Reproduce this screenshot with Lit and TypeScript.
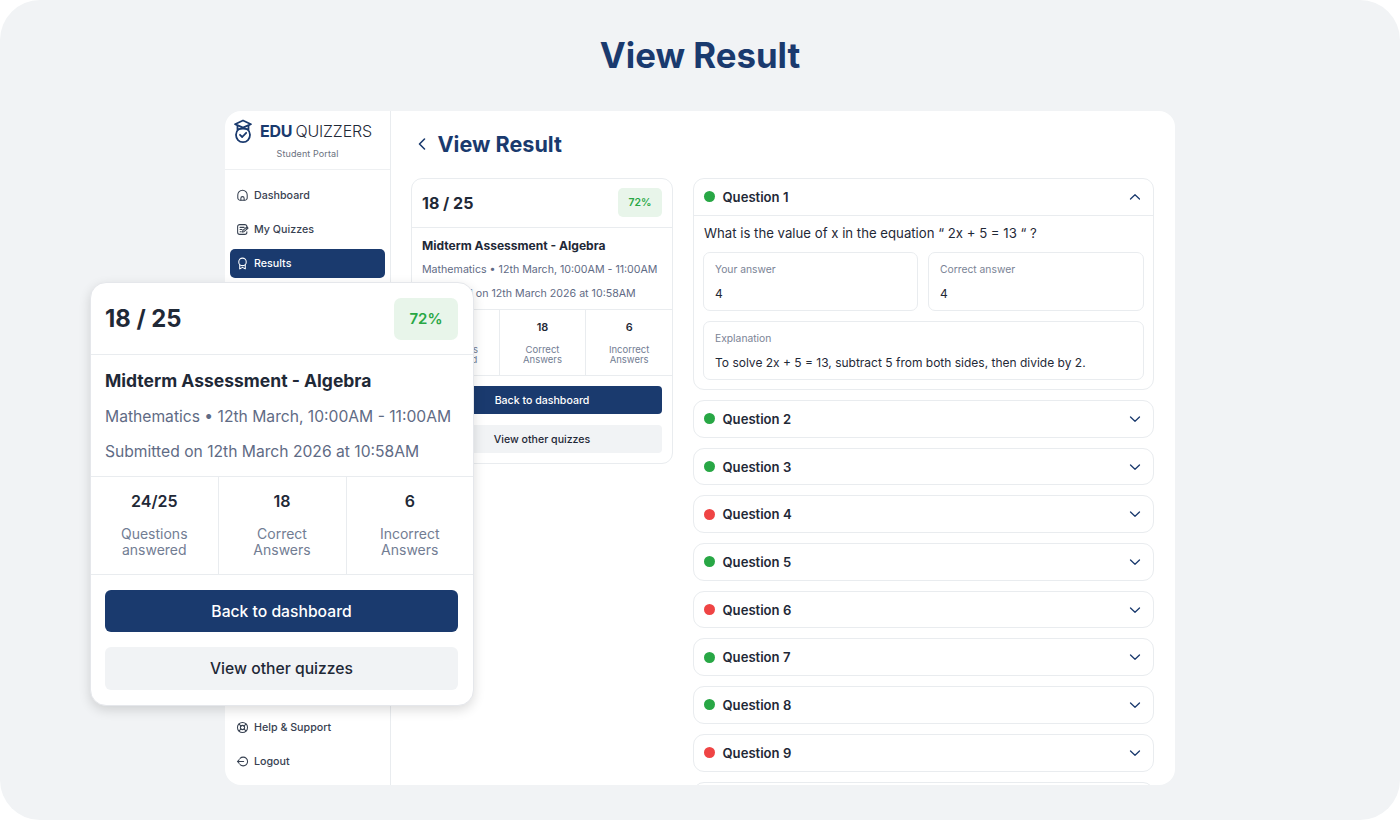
import { LitElement, html, css, svg } from "lit";
import { customElement } from "lit/decorators.js";

const ICONS: Record<string, unknown> = {
  home: svg`<path d="M2.2 7.4a5.8 5.8 0 0 1 11.6 0v3.4a3 3 0 0 1-3 3H5.2a3 3 0 0 1-3-3z"/><path d="M6 13.6v-2.2a2 2 0 0 1 4 0v2.2"/>`,
  quiz: svg`<path d="M13.4 7.2V4.6a2.6 2.6 0 0 0-2.6-2.6H4.6A2.6 2.6 0 0 0 2 4.6v6.8A2.6 2.6 0 0 0 4.6 14h6.2a2.6 2.6 0 0 0 2.6-2.6v-.6"/><path d="M5 5.4h5M5 8h2.4M5 10.8h1.6"/><path d="M8 11.2l.5-2 5-4.4 1.3 1.4-5 4.5z"/>`,
  award: svg`<circle cx="8" cy="6" r="4.6"/><path d="M4.6 9.6v5l3.4-1.8 3.4 1.8V9.6"/>`,
  help: svg`<circle cx="8" cy="8" r="6.2"/><circle cx="8" cy="8" r="2.6"/><path d="M3.8 3.8l2.4 2.4M12.2 3.8L9.8 6.2M3.8 12.2l2.4-2.4M12.2 12.2L9.8 9.8"/>`,
  logout: svg`<path d="M5 4.2A5.4 5.4 0 1 1 5 11.8"/><path d="M9.4 8H1.8M4 5.8L1.8 8 4 10.2"/>`,
};

const icon = (n: string) =>
  html`<svg class="nav-ic" viewBox="0 0 16 16" fill="none" stroke="currentColor" stroke-width="1.3" stroke-linecap="round" stroke-linejoin="round">${ICONS[n]}</svg>`;

const chevron = (up: boolean) =>
  html`<svg class="chev" viewBox="0 0 12 12" fill="none" stroke="#1a3a6e" stroke-width="1.3" stroke-linecap="round" stroke-linejoin="round"><path d=${up ? "M1.5 8L6 3.8 10.5 8" : "M1.5 4L6 8.2 10.5 4"}/></svg>`;

const QUESTIONS: [number, boolean][] = [
  [2, true], [3, true], [4, false], [5, true], [6, false], [7, true], [8, true], [9, false],
];

@customElement("app-root")
export class AppRoot extends LitElement {
  static styles = css`
    :host { display: block; width: 1400px; height: 820px; background: #fff; font-family: Inter, "Noto Sans", sans-serif; color: #1f2937; overflow: hidden; }
    * { box-sizing: border-box; }
    .page { position: relative; width: 1400px; height: 820px; background: #f1f3f5; border-radius: 40px; display: flex; flex-direction: column; align-items: center; overflow: hidden; }
    h1 { margin: 0; height: 111px; padding-top: 33px; font-size: 34.8px; line-height: 44px; font-weight: 700; color: #1a3a6e; }
    .win { width: 950px; height: 674px; background: #fff; border-radius: 16px; display: flex; overflow: hidden; }
    .side { width: 166px; flex: none; border-right: 1px solid #e9ecef; display: flex; flex-direction: column; }
    .brand { height: 59px; flex: none; border-bottom: 1px solid #eef0f2; display: flex; flex-direction: column; align-items: center; }
    .logo { display: flex; align-items: center; height: 26px; margin-top: 7px; width: 100%; padding-left: 8px; }
    .logo svg { width: 20px; height: 25px; flex: none; margin-right: 7px; }
    .edu { font-size: 16px; font-weight: 700; color: #1a3a6e; letter-spacing: -0.2px; margin-right: 3px; }
    .qz { font-size: 16px; font-weight: 300; color: #1f2937; letter-spacing: -0.15px; }
    .portal { margin-top: 3px; font-size: 9px; line-height: 14px; color: #6b7280; letter-spacing: 0.1px; }
    .nav { padding: 11px 5px 0; display: flex; flex-direction: column; gap: 5.2px; }
    .item { height: 29px; border-radius: 5px; display: flex; align-items: center; gap: 5px; padding-left: 6px; font-size: 10.7px; font-weight: 450; color: #374151; }
    .item.on { background: #1a3a6e; color: #fff; }
    .nav-ic { width: 13px; height: 13px; flex: none; }
    .spacer { flex: 1; }
    .nav.bottom { padding: 0 5px 9px; }
    .main { flex: 1; min-width: 0; padding: 0 21px 0 20px; display: flex; flex-direction: column; }
    .head { height: 67px; flex: none; display: flex; align-items: center; padding-bottom: 2px; }
    .back { width: 10px; height: 14px; margin: 0 10.5px 0 6px; flex: none; }
    h2 { margin: 0; font-size: 21.6px; font-weight: 700; color: #1a3a6e; line-height: 32px; }
    .cols { display: flex; gap: 20px; align-items: flex-start; flex: 1; min-height: 0; }
    .card { width: 262px; flex: none; border: 1px solid #e9ecef; border-radius: 11px; background: #fff; }
    .chd { height: 49px; padding: 0 10px 1px; display: flex; align-items: center; justify-content: space-between; border-bottom: 1px solid #e9ecef; }
    .score { font-size: 16px; font-weight: 650; color: #1f2937; }
    .pct { width: 44px; height: 29px; border-radius: 5px; background: #e8f5ea; color: #28a745; font-size: 10.4px; font-weight: 600; display: flex; align-items: center; justify-content: center; }
    .info { height: 82px; padding: 12px 10px 0; border-bottom: 1px solid #e9ecef; }
    .tt { font-size: 12.05px; font-weight: 650; line-height: 12px; color: #1f2937; margin-bottom: 11px; }
    .mt { font-size: 10.65px; line-height: 14px; color: #5f6b85; margin-top: 10px; white-space: nowrap; }
    .stats { height: 66px; display: grid; grid-template-columns: repeat(3, 1fr); border-bottom: 1px solid #e9ecef; }
    .st { text-align: center; padding-top: 10px; border-left: 1px solid #e9ecef; }
    .st:first-child { border-left: 0; }
    .sv { font-size: 10.9px; font-weight: 600; line-height: 14px; color: #1f2937; }
    .sl { font-size: 9.5px; line-height: 10.5px; color: #727d93; margin-top: 10.5px; }
    .btns { padding: 10px 10px 10px; display: flex; flex-direction: column; gap: 11px; }
    .btn { height: 28px; border-radius: 4px; display: flex; align-items: center; justify-content: center; font-size: 10.6px; font-weight: 450; }
    .btn.pri { background: #1a3a6e; color: #fff; }
    .btn.sec { background: #f1f3f5; color: #1f2937; }

    .float { position: absolute; left: 90px; top: 282px; width: 384px; background: #fff; border-radius: 16px; border: 1px solid #e5e7eb; box-shadow: 0 4px 12px rgba(0,0,0,.14); }
    .float .chd { height: 72px; padding: 0 15px 0 14px; }
    .float .score { font-size: 23.8px; }
    .float .pct { width: 64px; height: 42px; border-radius: 7px; font-size: 15px; }
    .float .info { height: 122px; padding: 15px 15px 0 14px; }
    .float .tt { font-size: 17.5px; line-height: 21px; margin-bottom: 16px; }
    .float .mt { font-size: 15.65px; line-height: 20px; margin-top: 15px; }
    .float .stats { height: 98px; grid-template-columns: 126.5px 128px 1fr; }
    .float .st { padding-top: 14px; }
    .float .sv { font-size: 16px; line-height: 20px; }
    .float .sl { font-size: 14px; line-height: 16px; margin-top: 15px; }
    .float .btns { padding: 15px 15px 15px 14px; gap: 15px; }
    .float .btn { height: 42.3px; border-radius: 6px; font-size: 15.7px; }

    .qs { flex: 1; min-width: 0; display: flex; flex-direction: column; gap: 10px; }
    .q { border: 1px solid #e9ecef; border-radius: 11px; background: #fff; flex: none; }
    .q.empty { height: 37.7px; }
    .qh { height: 35.7px; padding: 0 12px 0 10px; display: flex; align-items: center; gap: 7.5px; }
    .q.open .qh { height: 37px; padding-bottom: 1px; border-bottom: 1px solid #e9ecef; }
    .dot { width: 11px; height: 11px; border-radius: 50%; background: #28a745; flex: none; }
    .dot.bad { background: #ef4444; }
    .qn { flex: 1; font-size: 13.1px; font-weight: 600; color: #1f2937; }
    .chev { width: 12px; height: 12px; flex: none; }
    .qb { padding: 8px 9px 9px 9px; }
    .qt { font-size: 13.2px; line-height: 18px; color: #1f2937; padding-left: 1px; }
    .ans { display: grid; grid-template-columns: 215px 1fr; gap: 10px; margin-top: 10px; }
    .box { height: 59px; border: 1px solid #e9ecef; border-radius: 7px; padding: 9px 11px 0; }
    .box.ex { margin-top: 10px; }
    .bl { font-size: 10.3px; line-height: 14px; color: #7b8496; }
    .bv { font-size: 12px; line-height: 16px; color: #1f2937; margin-top: 10px; white-space: nowrap; }
  `;

  private card(cls: string) {
    return html`<div class=${cls}>
      <div class="chd"><span class="score">18 / 25</span><span class="pct">72%</span></div>
      <div class="info">
        <div class="tt">Midterm Assessment - Algebra</div>
        <div class="mt">Mathematics • 12th March, 10:00AM - 11:00AM</div>
        <div class="mt">Submitted on 12th March 2026 at 10:58AM</div>
      </div>
      <div class="stats">
        <div class="st"><div class="sv">24/25</div><div class="sl">Questions<br />answered</div></div>
        <div class="st"><div class="sv">18</div><div class="sl">Correct<br />Answers</div></div>
        <div class="st"><div class="sv">6</div><div class="sl">Incorrect<br />Answers</div></div>
      </div>
      <div class="btns">
        <div class="btn pri">Back to dashboard</div>
        <div class="btn sec">View other quizzes</div>
      </div>
    </div>`;
  }

  render() {
    return html`<div class="page">
      <h1>View Result</h1>
      <div class="win">
        <aside class="side">
          <div class="brand">
            <div class="logo">
              <svg viewBox="0 0 20 25" fill="none" stroke="#1a3a6e" stroke-width="1.8" stroke-linecap="round" stroke-linejoin="round">
                <path d="M10 1.5L18 5.2 10 8.6 2 5.2z"/>
                <path d="M4.5 7v3.4M15.5 7v3.4"/>
                <path d="M5.4 10.4c-1.6 1.4-2.4 3.2-2.4 5.4 0 4.2 3 7.4 7 7.4s7-3.2 7-7.4c0-2.2-.8-4-2.4-5.4"/>
                <path d="M5.4 10.4c3-1.2 6.2-1.2 9.2 0"/>
                <path d="M7 15.8l2.2 2.2 4-4.2"/>
              </svg>
              <span class="edu">EDU</span><span class="qz">QUIZZERS</span>
            </div>
            <div class="portal">Student Portal</div>
          </div>
          <nav class="nav">
            <div class="item">${icon("home")}Dashboard</div>
            <div class="item">${icon("quiz")}My Quizzes</div>
            <div class="item on">${icon("award")}Results</div>
          </nav>
          <div class="spacer"></div>
          <nav class="nav bottom">
            <div class="item">${icon("help")}Help &amp; Support</div>
            <div class="item">${icon("logout")}Logout</div>
          </nav>
        </aside>
        <main class="main">
          <div class="head">
            <svg class="back" viewBox="0 0 10 14" fill="none" stroke="#1a3a6e" stroke-width="1.6" stroke-linecap="round" stroke-linejoin="round"><path d="M7.5 2L2.5 7l5 5"/></svg>
            <h2>View Result</h2>
          </div>
          <div class="cols">
            ${this.card("card")}
            <div class="qs">
              <div class="q open">
                <div class="qh"><span class="dot"></span><span class="qn">Question 1</span>${chevron(true)}</div>
                <div class="qb">
                  <div class="qt">What is the value of x in the equation “ 2x + 5 = 13 “ ?</div>
                  <div class="ans">
                    <div class="box"><div class="bl">Your answer</div><div class="bv">4</div></div>
                    <div class="box"><div class="bl">Correct answer</div><div class="bv">4</div></div>
                  </div>
                  <div class="box ex"><div class="bl">Explanation</div><div class="bv">To solve 2x + 5 = 13, subtract 5 from both sides, then divide by 2.</div></div>
                </div>
              </div>
              ${QUESTIONS.map(([n, ok]) => html`<div class="q">
                <div class="qh"><span class="dot ${ok ? "" : "bad"}"></span><span class="qn">Question ${n}</span>${chevron(false)}</div>
              </div>`)}
              <div class="q empty"></div>
            </div>
          </div>
        </main>
      </div>
      ${this.card("float")}
    </div>`;
  }
}
